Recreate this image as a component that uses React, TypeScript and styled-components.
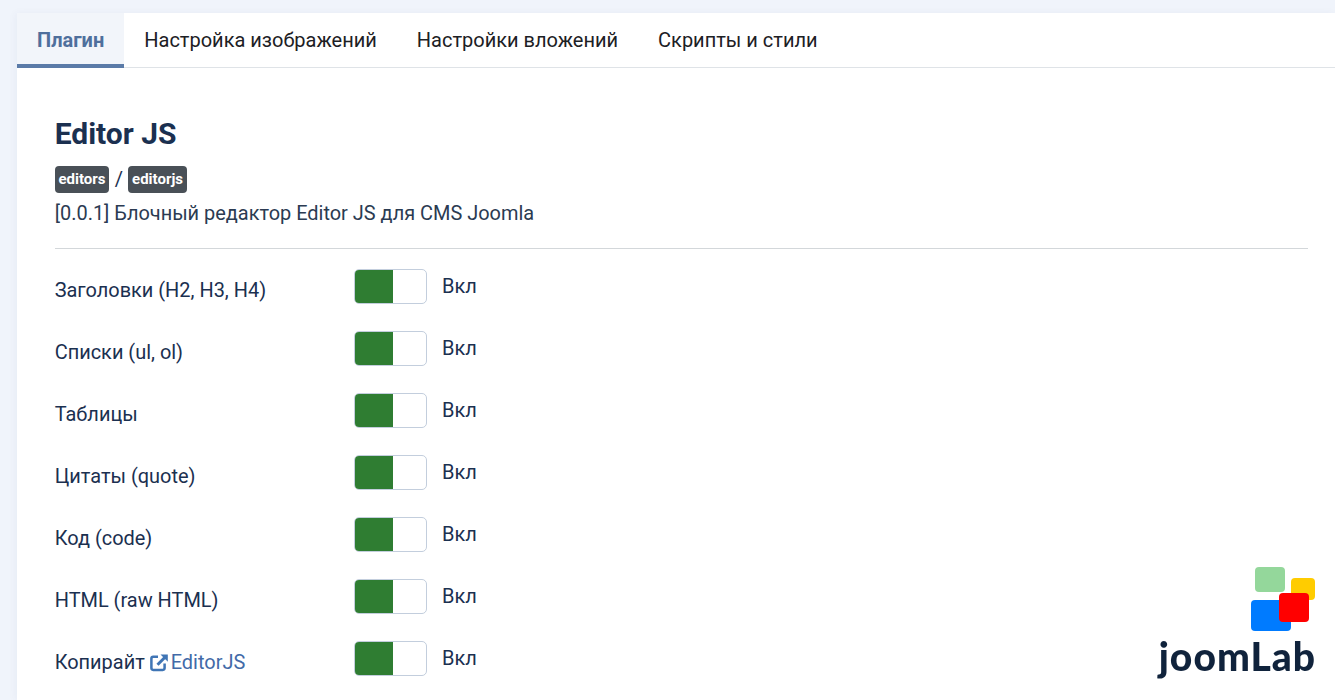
import React from "react";
import styled, { createGlobalStyle } from "styled-components";

const Global = createGlobalStyle`
  html, body { margin: 0; padding: 0; height: 700px; overflow: hidden; background: #f0f4fb; }
  body { font-family: Roboto, "Liberation Sans", sans-serif; color: #1b3050; }
`;

const Page = styled.div`
  height: 700px;
  padding: 13px 0 0 17px;
  box-sizing: border-box;
  overflow: hidden;
`;
const Card = styled.main`
  background: #fff;
  height: 687px;
  overflow: hidden;
  box-shadow: -2px 0 8px rgba(30, 60, 110, 0.04);
`;
const Tabs = styled.nav`
  display: flex;
  height: 55px;
  box-sizing: border-box;
  border-bottom: 1px solid #dfe3e7;
`;
const Tab = styled.a<{ $active?: boolean }>`
  display: flex;
  align-items: center;
  height: 55px;
  box-sizing: border-box;
  padding: 2px 20px 0;
  font-size: 20px;
  color: ${(p) => (p.$active ? "#4f6f9c" : "#1c2024")};
  font-weight: ${(p) => (p.$active ? 700 : 400)};
  background: ${(p) => (p.$active ? "#f2f5fa" : "transparent")};
  border-bottom: 4px solid ${(p) => (p.$active ? "#5b7ba8" : "transparent")};
`;
const Content = styled.section`
  padding: 48px 27px 0 37.7px;
`;
const Title = styled.h1`
  margin: 0;
  font-size: 30px;
  line-height: 36px;
  font-weight: 700;
  color: #1b3050;
`;
const Path = styled.div`
  display: flex;
  align-items: center;
  gap: 5.5px;
  margin-top: 14px;
  font-size: 20px;
  line-height: 27px;
`;
const Badge = styled.span`
  display: inline-block;
  height: 27px;
  line-height: 27px;
  padding: 0 3.7px;
  border-radius: 4px;
  background: #495057;
  color: #fff;
  font-size: 15px;
  font-weight: 700;
`;
const Description = styled.p`
  margin: 6px 0 0;
  font-size: 19.95px;
  line-height: 28px;
  color: #2b3b52;
`;
const Divider = styled.hr`
  margin: 21px 0 20px;
  border: 0;
  border-top: 1px solid #d3d7da;
`;
const Row = styled.div`
  display: grid;
  grid-template-columns: 299.3px 73px auto;
  height: 62px;
  align-items: start;
`;
const Label = styled.label`
  font-size: 19.95px;
  line-height: 28px;
  padding-top: 7px;
  color: #1b3050;
  display: flex;
  align-items: center;
  white-space: pre;
`;
const Switch = styled.span`
  display: flex;
  width: 73px;
  height: 35px;
  box-sizing: border-box;
  border: 1px solid #c3cedd;
  border-radius: 5px;
  overflow: hidden;
  background: #fff;
`;
const Knob = styled.span`
  width: 38px;
  background: #2f7d32;
`;
const State = styled.span`
  font-size: 20px;
  line-height: 28px;
  margin-left: 15px;
  padding-top: 3px;
  color: #1b3050;
`;
const Link = styled.a`
  color: #426aa8;
  display: inline-flex;
  align-items: center;
  gap: 2px;
`;
const Logo = styled.div`
  position: fixed;
  right: 20px;
  bottom: 22px;
  display: flex;
  flex-direction: column;
  align-items: flex-end;
`;
const LogoText = styled.div`
  font-family: Lato, sans-serif;
  font-weight: 900;
  font-size: 39px;
  line-height: 44px;
  letter-spacing: 1px;
  margin-right: -1px;
  color: #10233c;
  margin-top: 3px;
`;

const ExternalIcon = () => (
  <svg width="19" height="19" viewBox="0 0 19 18" fill="none" stroke="#3f75b5" strokeWidth="2.5">
    <path d="M8 3.2H3.2a1.8 1.8 0 0 0-1.8 1.8v9.6a1.8 1.8 0 0 0 1.8 1.8h9.6a1.8 1.8 0 0 0 1.8-1.8V10" />
    <path d="M7.5 11.2 16 2.7" strokeWidth="3" />
    <path d="M10.5 1h7.3v7.3z" fill="#3f75b5" stroke="none" />
  </svg>
);

const LogoMark = () => (
  <svg width="64" height="64" viewBox="0 0 64 64">
    <rect x="4" y="0" width="30" height="25" rx="4" fill="#94d79b" />
    <rect x="40" y="11" width="24" height="22" rx="4" fill="#ffcc00" />
    <rect y="33" width="40" height="31" rx="4" fill="#007bff" />
    <rect x="28" y="26" width="30" height="29" rx="4" fill="#ff0000" />
  </svg>
);

const rows: React.ReactNode[] = [
  "Заголовки (H2, H3, H4)",
  "Списки (ul, ol)",
  "Таблицы",
  "Цитаты (quote)",
  "Код (code)",
  "HTML (raw HTML)",
  <>
    Копирайт{" "}
    <Link>
      <ExternalIcon />
      EditorJS
    </Link>
  </>,
];

export default function App() {
  return (
    <Page>
      <Global />
      <Card>
        <Tabs>
          <Tab $active>Плагин</Tab>
          <Tab>Настройка изображений</Tab>
          <Tab>Настройки вложений</Tab>
          <Tab>Скрипты и стили</Tab>
        </Tabs>
        <Content>
          <Title>Editor JS</Title>
          <Path>
            <Badge>editors</Badge>/<Badge>editorjs</Badge>
          </Path>
          <Description>[0.0.1] Блочный редактор Editor JS для CMS Joomla</Description>
          <Divider />
          {rows.map((r, i) => (
            <Row key={i}>
              <Label>{r}</Label>
              <Switch>
                <Knob />
              </Switch>
              <State>Вкл</State>
            </Row>
          ))}
        </Content>
      </Card>
      <Logo>
        <LogoMark />
        <LogoText>joomLab</LogoText>
      </Logo>
    </Page>
  );
}
